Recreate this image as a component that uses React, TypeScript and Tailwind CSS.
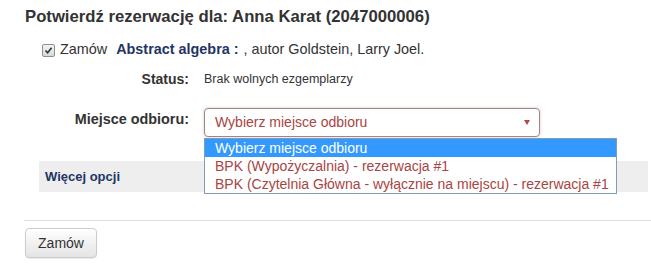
export default function App() {
  return (
    <div className="w-[651px] h-[267px] bg-white font-['Liberation_Sans',Arial,sans-serif] text-[#333] overflow-hidden">
      <div className="h-[34px] flex items-center pl-[25px]">
        <h3 className="text-[16.7px] font-bold leading-none">Potwierdź rezerwację dla: Anna Karat (2047000006)</h3>
      </div>

      <div className="h-[32px] flex items-center pl-[42px] text-[14.4px]">
        <span className="w-[13px] h-[13px] rounded-[2px] border border-[#8f8f8f] bg-gradient-to-b from-[#f4f4f4] to-[#d8d8d8] flex items-center justify-center">
          <svg width="9" height="9" viewBox="0 0 9 9">
            <path d="M1.5 4.5 L3.6 6.8 L7.6 1.8" fill="none" stroke="#333" strokeWidth="1.6" />
          </svg>
        </span>
        <span className="ml-[5px]">Zamów</span>
        <a className="ml-[9px] font-bold text-[#1f3565]">Abstract algebra :</a>
        <span className="ml-[5px]">, autor Goldstein, Larry Joel.</span>
      </div>

      <div className="h-[26px] grid grid-cols-[164px_1fr] gap-x-[15px] items-center pl-[25px]">
        <span className="text-right font-bold text-[14px]">Status:</span>
        <span className="text-[12.5px]">Brak wolnych ezgemplarzy</span>
      </div>

      <div className="mt-[16px] h-[29px] grid grid-cols-[164px_336px] gap-x-[15px] pl-[25px]">
        <span className="text-right font-bold text-[14.4px] leading-[20px] pt-[1px]">Miejsce odbioru:</span>
        <div className="relative">
          <div className="h-[29px] rounded-[4px] border border-[#a08585] shadow-[0_0_3px_rgba(169,68,66,0.35)] flex items-center justify-between pl-[10px] pr-[9px] text-[14px] text-[#a94442]">
            <span>Wybierz miejsce odbioru</span>
            <svg width="6" height="5" viewBox="0 0 6 5">
              <path d="M0 0 H6 L3 5 Z" fill="#b04a48" />
            </svg>
          </div>
          <ul className="absolute left-0 top-[30px] w-[413px] z-10 bg-white border border-[#7f9db9] text-[14px] leading-[18px] text-[#a94442]">
            <li className="bg-[#3399ff] text-white pl-[10px]">Wybierz miejsce odbioru</li>
            <li className="pl-[10px]">BPK (Wypożyczalnia) - rezerwacja #1</li>
            <li className="pl-[10px]">BPK (Czytelnia Główna - wyłącznie na miejscu) - rezerwacja #1</li>
          </ul>
        </div>
      </div>

      <div className="mt-[24px] ml-[39px] mr-[3px] h-[31px] bg-[#eeeeee] flex items-center pl-[6px]">
        <span className="font-bold text-[13px] text-[#1f3565]">Więcej opcji</span>
      </div>

      <div className="mt-[28px] ml-[24px] border-t border-[#dddddd]" />

      <div className="pt-[7px] pl-[25px]">
        <button className="w-[72px] h-[30px] rounded-[4px] border border-[#cccccc] bg-gradient-to-b from-white to-[#e4e4e4] shadow-[0_1px_1px_rgba(0,0,0,0.08)] text-[14px] text-[#333]">
          Zamów
        </button>
      </div>
    </div>
  );
}
